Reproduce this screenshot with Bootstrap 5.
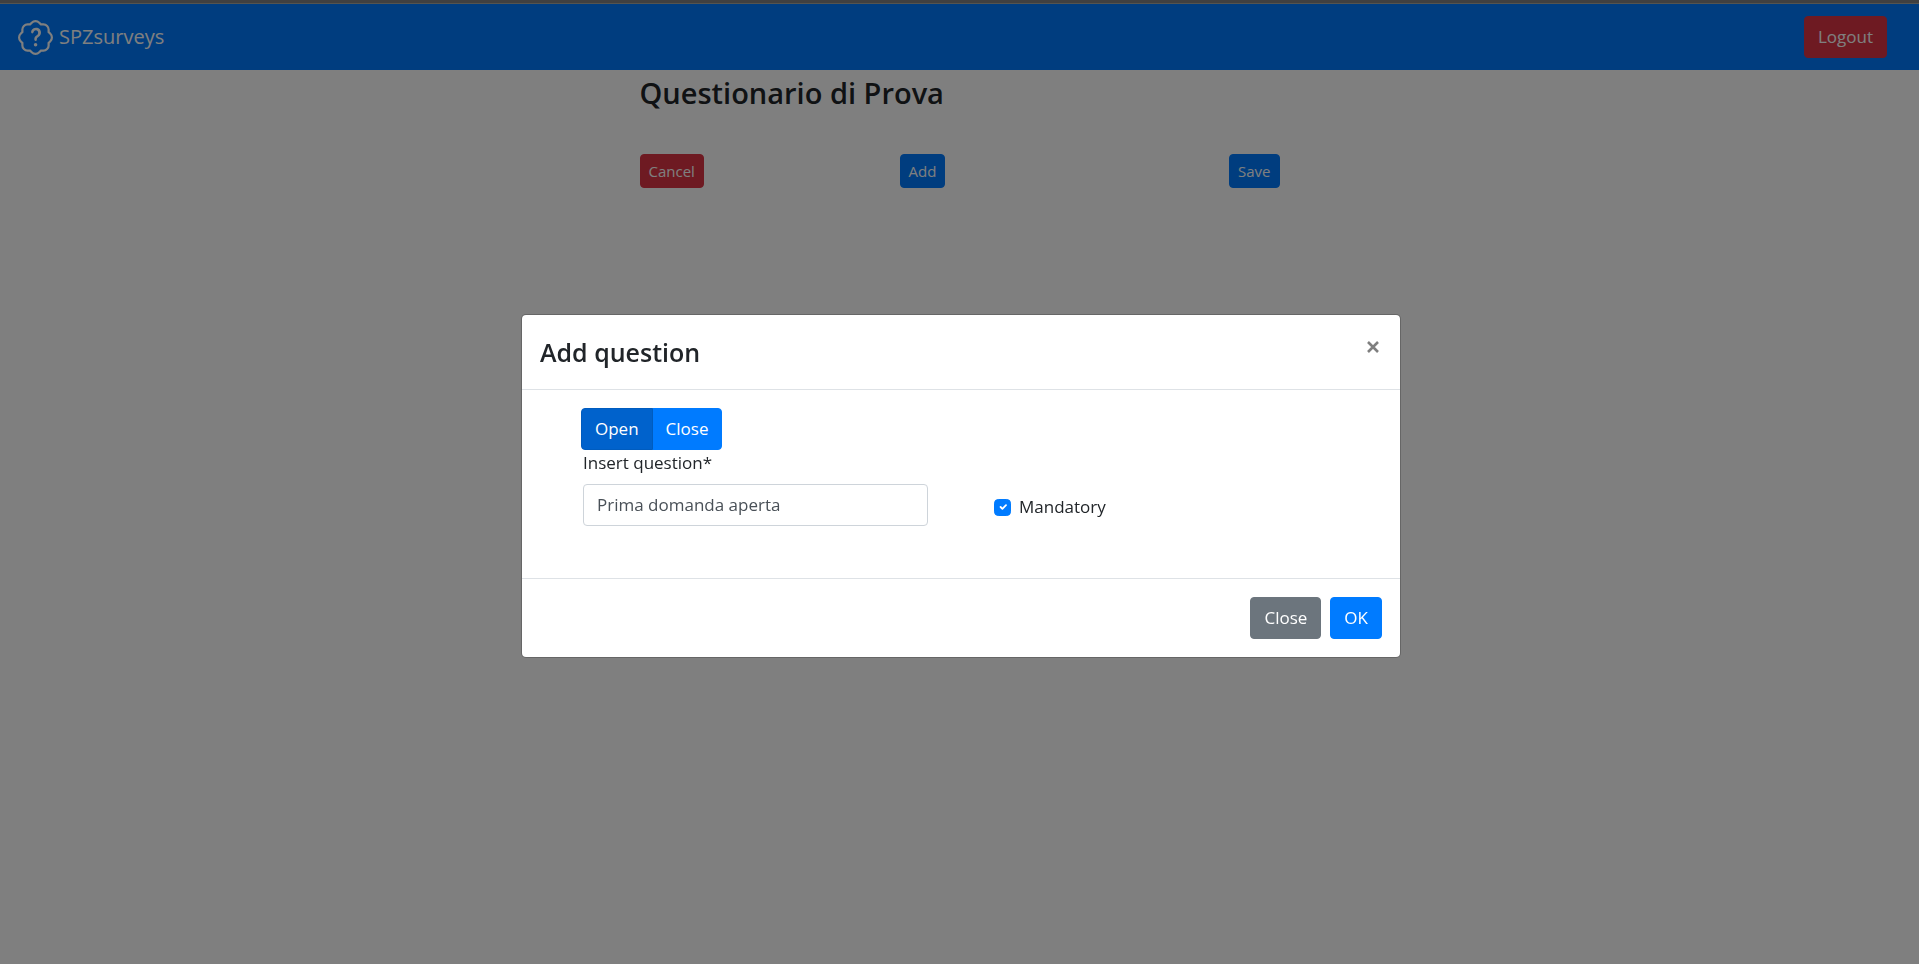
<!DOCTYPE html>
<html lang="en">
<head>
<meta charset="utf-8">
<meta name="viewport" content="width=device-width, initial-scale=1">
<title>SPZsurveys</title>
<link href="https://cdn.jsdelivr.net/npm/bootstrap@5.3.0/dist/css/bootstrap.min.css" rel="stylesheet">
<style>
  body { font-family: "Open Sans", "Noto Sans", sans-serif; font-size: 17px; line-height: 26px; color: #212529; }
  .topbar { background: #007bff; border-top: 3px solid #808080; box-shadow: inset 0 1px 0 #a8a8a0; padding: 13px 32px 12px 18px; }
  .brand { font-size: 20px; line-height: 30px; color: #fff; gap: 6px; }
  .btn { --bs-btn-font-size: 17px; --bs-btn-line-height: 26px; --bs-btn-padding-x: 13px; --bs-btn-padding-y: 7px; --bs-btn-border-radius: 4px; }
  .btn-sm { --bs-btn-font-size: 15px; --bs-btn-line-height: 24px; --bs-btn-padding-x: 8px; --bs-btn-padding-y: 4px; }
  .btn-primary { --bs-btn-bg: #007bff; --bs-btn-border-color: #007bff; --bs-btn-active-bg: #0062cc; --bs-btn-active-border-color: #005cbf; }
  .btn-danger { --bs-btn-bg: #dc3545; --bs-btn-border-color: #dc3545; }
  .survey { width: 640px; max-width: 100%; }
  .survey h1 { font-size: 29px; line-height: 38px; font-weight: 600; margin: 4px 0 42px; }
  .actions { display: grid; grid-template-columns: 260px 1fr auto; justify-items: start; }
  .modal { --bs-modal-width: 880px; --bs-modal-border-radius: 5px; --bs-modal-inner-border-radius: 4px; --bs-modal-border-color: rgba(0,0,0,.2); }
  .modal-dialog { margin-bottom: 20px; padding-left: 3px; box-sizing: content-box; }
  .modal-dialog-centered { padding-top: 8px; box-sizing: border-box; }
  .modal { --bs-modal-width: 883px; }
  .modal-header { padding: 18px; border-color: #dee2e6; }
  .modal-title { font-size: 25px; line-height: 38px; font-weight: 600; }
  .dismiss { border: 0; background: none; padding: 0; margin: 8px 3px 0 0; color: #7f7f7f; line-height: 0; }
  .modal-body { padding: 18px 59px 52px; }
  .modal-footer { padding: 18px; gap: 9px; border-color: #dee2e6; }
  .modal-footer > * { margin: 0; }
  .fields { display: grid; grid-template-columns: 345px 1fr; column-gap: 66px; padding-left: 2px; }
  .form-control { font-size: 17px; line-height: 26px; padding: 7px 13px; border-color: #ced4da; border-radius: 4px; color: #495057; }
  .required-toggle { padding-bottom: 6px; }
  .form-check-input { width: 17px; height: 17px; margin: 0; }
  .form-check-input:checked { background-color: #007bff; border-color: #007bff; background-size: 12px; }
</style>
</head>
<body>
<nav class="topbar d-flex justify-content-between align-items-center">
  <a class="brand d-flex align-items-center text-decoration-none" href="#">
    <svg width="35" height="35" viewBox="0 0 16 16" fill="currentColor" aria-hidden="true">
      <path d="m10.273 2.513-.921-.944.715-.698.622.637.89-.011a2.89 2.89 0 0 1 2.924 2.924l-.01.89.636.622a2.89 2.89 0 0 1 0 4.134l-.637.622.011.89a2.89 2.89 0 0 1-2.924 2.924l-.89-.01-.622.636a2.89 2.89 0 0 1-4.134 0l-.622-.637-.89.011a2.89 2.89 0 0 1-2.924-2.924l.01-.89-.636-.622a2.89 2.89 0 0 1 0-4.134l.637-.622-.011-.89a2.89 2.89 0 0 1 2.924-2.924l.89.01.622-.636a2.89 2.89 0 0 1 4.134 0l-.715.698a1.89 1.89 0 0 0-2.704 0l-.92.944-1.32-.016a1.89 1.89 0 0 0-1.911 1.912l.016 1.318-.944.921a1.89 1.89 0 0 0 0 2.704l.944.92-.016 1.32a1.89 1.89 0 0 0 1.912 1.911l1.318-.016.921.944a1.89 1.89 0 0 0 2.704 0l.92-.944 1.32.016a1.89 1.89 0 0 0 1.911-1.912l-.016-1.318.944-.921a1.89 1.89 0 0 0 0-2.704l-.944-.92.016-1.32a1.89 1.89 0 0 0-1.912-1.911z"/>
      <path d="M8.05 9.6c.336 0 .504-.24.554-.627.04-.534.198-.815.847-1.26.673-.475 1.049-1.09 1.049-1.986 0-1.325-.92-2.227-2.262-2.227-1.02 0-1.792.492-2.1 1.29A1.7 1.7 0 0 0 6 5.48c0 .393.203.64.545.64.272 0 .455-.147.564-.51.158-.592.525-.915 1.074-.915.61 0 1.03.446 1.03 1.084 0 .563-.208.885-.822 1.325-.619.433-.926.914-.926 1.64v.111c0 .428.208.745.585.745z"/>
      <circle cx="8.03" cy="11.37" r=".8"/>
    </svg>
    <span>SPZsurveys</span>
  </a>
  <button type="button" class="btn btn-danger">Logout</button>
</nav>

<main class="survey mx-auto">
  <h1>Questionario di Prova</h1>
  <div class="actions">
    <button type="button" class="btn btn-danger btn-sm">Cancel</button>
    <button type="button" class="btn btn-primary btn-sm">Add</button>
    <button type="button" class="btn btn-primary btn-sm">Save</button>
  </div>
</main>

<div class="modal-backdrop show"></div>
<div class="modal show d-block" role="dialog" aria-labelledby="dialog-title">
  <div class="modal-dialog modal-dialog-centered">
    <div class="modal-content">
      <div class="modal-header align-items-start">
        <h2 class="modal-title" id="dialog-title">Add question</h2>
        <button type="button" class="dismiss" aria-label="Dismiss">
          <svg width="12" height="12" viewBox="0 0 12 12" fill="none" stroke="currentColor" stroke-width="2.6"><path d="M1 1l10 10M11 1L1 11"/></svg>
        </button>
      </div>
      <div class="modal-body">
        <div class="btn-group d-inline-flex align-top" role="group" aria-label="Question type">
          <button type="button" class="btn btn-primary active">Open</button>
          <button type="button" class="btn btn-primary">Close</button>
        </div>
        <div class="fields">
          <div>
            <label class="d-block mb-2" for="question">Insert question*</label>
            <input type="text" class="form-control" id="question" value="Prima domanda aperta">
          </div>
          <div class="required-toggle d-flex align-items-center align-self-end gap-2">
            <input type="checkbox" class="form-check-input" id="mandatory" checked>
            <label for="mandatory">Mandatory</label>
          </div>
        </div>
      </div>
      <div class="modal-footer">
        <button type="button" class="btn btn-secondary">Close</button>
        <button type="button" class="btn btn-primary">OK</button>
      </div>
    </div>
  </div>
</div>
<script src="https://cdn.jsdelivr.net/npm/bootstrap@5.3.0/dist/js/bootstrap.bundle.min.js"></script>
</body>
</html>
